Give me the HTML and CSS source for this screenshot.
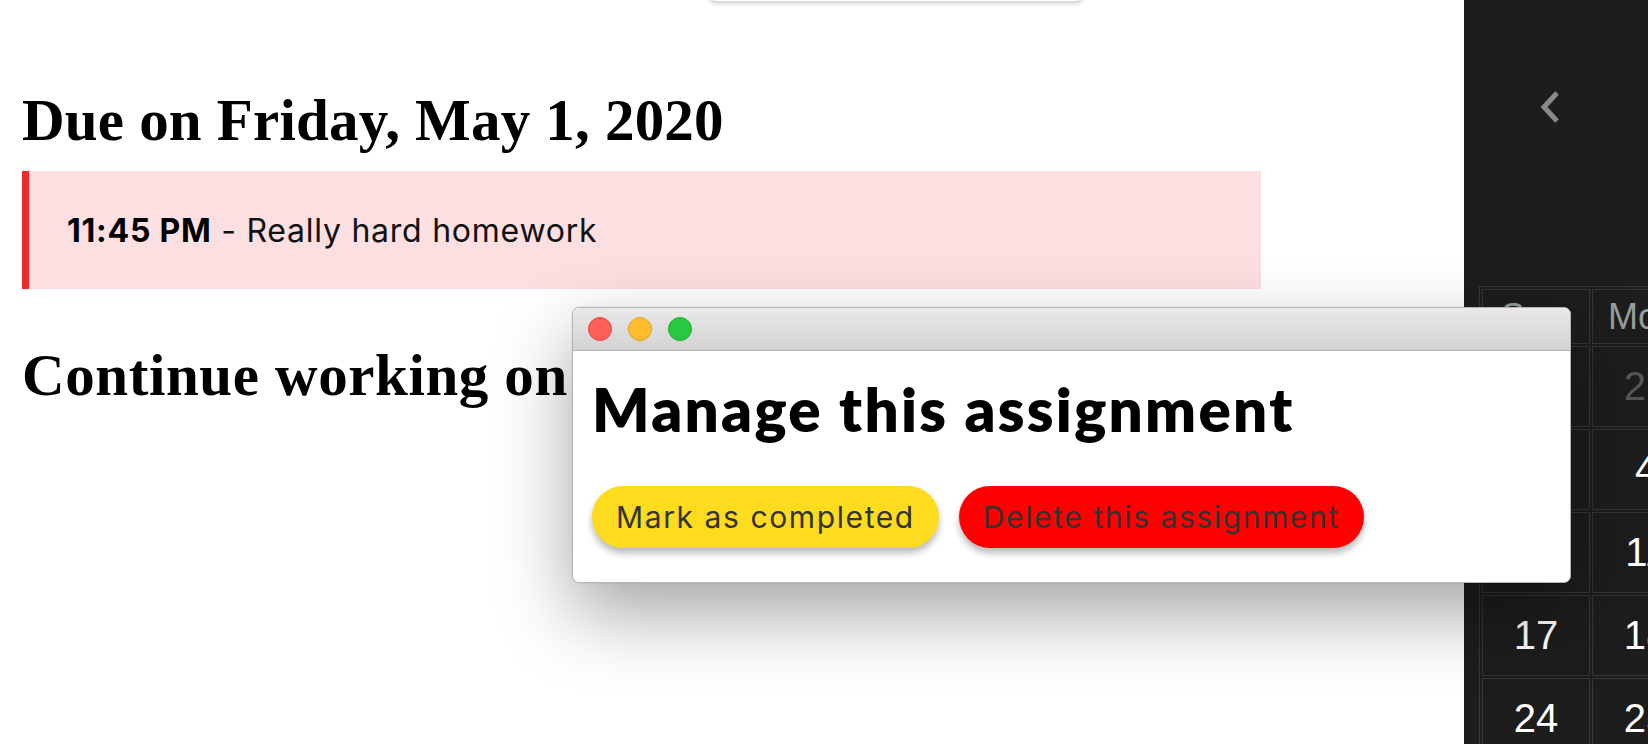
FILE: index.html
```html
<!DOCTYPE html>
<html lang="en">
<head>
<meta charset="utf-8">
<title>Assignments</title>
<link rel="stylesheet" href="styles.css">
</head>
<body>
<div class="app">
  <main class="main">
    <div class="stub"></div>
    <h2 class="day-heading">Due on Friday, May 1, 2020</h2>
    <div class="assignment"><strong>11:45 PM</strong>&nbsp;- Really hard homework</div>
    <h2 class="day-heading continue">Continue working on</h2>
  </main>
  <aside class="sidebar">
    <div class="cal-head">
      <svg class="chev" width="20" height="32" viewBox="0 0 20 32"><polyline points="17,2 4,16 17,30" fill="none" stroke="#8a8a8a" stroke-width="5"/></svg>
    </div>
    <div class="cal">
      <div class="cell hd">Sun</div><div class="cell hd">Mon</div><div class="cell hd">Tue</div><div class="cell hd">Wed</div><div class="cell hd">Thu</div><div class="cell hd">Fri</div><div class="cell hd">Sat</div>
      <div class="cell dim">26</div><div class="cell dim">27</div><div class="cell dim">28</div><div class="cell dim">29</div><div class="cell dim">30</div><div class="cell">1</div><div class="cell">2</div>
      <div class="cell">3</div><div class="cell">4</div><div class="cell">5</div><div class="cell">6</div><div class="cell">7</div><div class="cell">8</div><div class="cell">9</div>
      <div class="cell">10</div><div class="cell">11</div><div class="cell">12</div><div class="cell">13</div><div class="cell">14</div><div class="cell">15</div><div class="cell">16</div>
      <div class="cell">17</div><div class="cell">18</div><div class="cell">19</div><div class="cell">20</div><div class="cell">21</div><div class="cell">22</div><div class="cell">23</div>
      <div class="cell">24</div><div class="cell">25</div><div class="cell">26</div><div class="cell">27</div><div class="cell">28</div><div class="cell">29</div><div class="cell">30</div>
    </div>
  </aside>
</div>

<div class="window">
  <div class="titlebar">
    <span class="light red"></span><span class="light yellow"></span><span class="light green"></span>
  </div>
  <div class="win-body">
    <h1 class="win-title">Manage this assignment</h1>
    <div class="actions">
      <button class="btn btn-yellow">Mark as completed</button>
      <button class="btn btn-red">Delete this assignment</button>
    </div>
  </div>
</div>
</body>
</html>
```

FILE: styles.css
```css
* { box-sizing: border-box; }
html, body { margin: 0; padding: 0; background: #fff; }
body { height: 744px; overflow: hidden; position: relative; }

.app {
  display: flex;
  height: 744px;
}

.main {
  flex: 1 1 auto;
  padding-left: 22px;
}

.stub {
  width: 376px;
  height: 22px;
  margin: -21px 0 0 686px;
  background: #fff;
  border-radius: 0 0 8px 8px;
  box-shadow: 0 2px 5px rgba(0,0,0,0.22);
}

.day-heading {
  margin: 84px 0 15px 0;
  font-family: "Liberation Serif", serif;
  font-weight: 700;
  font-size: 59px;
  line-height: 71px;
  letter-spacing: 0.2px;
  color: #000;
}

.day-heading.continue {
  margin-top: 51px;
  letter-spacing: 0.6px;
}

.assignment {
  width: 1239px;
  height: 118px;
  display: flex;
  align-items: center;
  padding-left: 38px;
  background: #fcdfe0;
  border-left: 7px solid #ef2a2a;
  font-family: "Inter", sans-serif;
  font-size: 32px;
  letter-spacing: 0.75px;
  color: #111;
  white-space: pre;
}
.assignment strong { font-weight: 700; color: #000; }

.sidebar {
  flex: 0 0 184px;
  background: #1d1d1d;
  overflow: hidden;
}

.cal-head {
  height: 286px;
  padding: 91px 0 0 76px;
}
.chev { display: block; }

.cal {
  margin-left: 15px;
  display: grid;
  grid-template-columns: repeat(7, 108px);
  grid-template-rows: 55px;
  grid-auto-rows: 81px;
  gap: 2px;
  padding: 2px;
  border: 1px solid #363636;
  width: max-content;
}
.cell {
  border: 1px solid #363636;
  display: flex;
  align-items: center;
  justify-content: center;
  font-family: "Liberation Sans", Arial, sans-serif;
  font-size: 40px;
  color: #fff;
}
.cell.hd { font-size: 36px; color: #979d9d; padding-right: 6px; }
.cell.dim { color: #565656; }

.window {
  position: absolute;
  left: 572px;
  top: 307px;
  width: 999px;
  border: 1px solid #b5b5b5;
  border-radius: 7px;
  background: #fff;
  box-shadow: 0 30px 75px rgba(0,0,0,0.36), 0 0 0 1px rgba(0,0,0,0.04);
  overflow: hidden;
}

.titlebar {
  height: 43px;
  display: flex;
  align-items: center;
  gap: 16px;
  padding-left: 15px;
  background: linear-gradient(#e9e9e9, #d2d2d2);
  border-bottom: 1px solid #b4b4b4;
}
.light {
  width: 24px;
  height: 24px;
  border-radius: 50%;
}
.light.red { background: #ff5f57; border: 1px solid #e2463f; }
.light.yellow { background: #febc2e; border: 1px solid #e0a028; }
.light.green { background: #28c840; border: 1px solid #1fae30; }

.win-body {
  padding: 22px 19px 34px 19px;
}

.win-title {
  margin: 0 0 41px 0;
  font-family: "Lato", sans-serif;
  font-weight: 800;
  font-size: 60px;
  line-height: 72px;
  letter-spacing: 2.3px;
  color: #000;
}

.actions {
  display: flex;
  gap: 20px;
}

.btn {
  height: 62px;
  padding: 0 24px;
  border: none;
  border-radius: 31px;
  font-family: "Inter", sans-serif;
  font-size: 30px;
  letter-spacing: 1.6px;
  color: #333;
  box-shadow: 0 5px 7px rgba(0,0,0,0.28);
}
.btn-yellow { background: #fddc1f; }
.btn-red { background: #ff0000; }
```
